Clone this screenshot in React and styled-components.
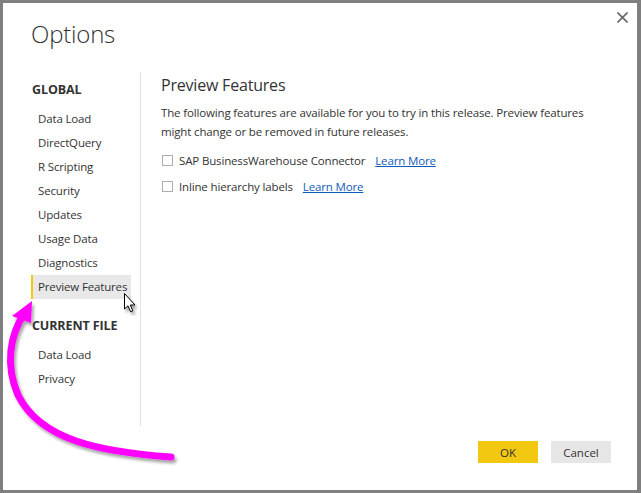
import React from "react";
import styled, { createGlobalStyle } from "styled-components";

const Global = createGlobalStyle`
  html, body { margin: 0; padding: 0; }
  body {
    background: #7f7f7f;
    font-family: "Open Sans", "Noto Sans", sans-serif;
    color: #333333;
  }
`;

const Dialog = styled.div`
  position: relative;
  margin: 3px 4px 3px 3px;
  width: 634px;
  height: 487px;
  background: #ffffff;
  display: flex;
  flex-direction: column;
  overflow: hidden;
`;

const Header = styled.div`
  height: 69px;
  display: flex;
  justify-content: space-between;
  align-items: flex-start;
  padding-left: 28px;
  box-sizing: border-box;
`;

const Title = styled.h1`
  margin: 0;
  padding-top: 15px;
  font-size: 24px;
  font-weight: 300;
  line-height: 32px;
  color: #333333;
  letter-spacing: -0.2px;
`;

const Close = styled.button`
  margin: 6px 7px 0 0;
  width: 16px;
  height: 16px;
  padding: 0;
  border: 0;
  background: transparent;
  display: flex;
  align-items: center;
  justify-content: center;
`;

const Body = styled.div`
  display: flex;
  height: 354px;
`;

const Sidebar = styled.nav`
  width: 138px;
  border-right: 1px solid #e1e1e1;
  padding: 7px 0 0 28px;
  box-sizing: border-box;
  display: flex;
  flex-direction: column;
`;

const Section = styled.div`
  height: 22px;
  line-height: 22px;
  font-size: 12.5px;
  font-weight: 700;
  padding-left: 1px;
  margin-top: ${(p) => (p.$first ? "0" : "16px")};
  margin-bottom: 6px;
  color: #333333;
  letter-spacing: -0.1px;
`;

const Item = styled.div`
  width: 100px;
  height: 24px;
  line-height: 24px;
  font-size: 11.5px;
  box-sizing: border-box;
  padding-left: 5px;
  border-left: 2px solid ${(p) => (p.$active ? "#f2c811" : "transparent")};
  background: ${(p) => (p.$active ? "#e8e8e8" : "transparent")};
  color: #333333;
  white-space: nowrap;
  letter-spacing: -0.15px;
`;

const Content = styled.section`
  flex: 1;
  padding: 2px 0 0 20px;
`;

const Heading = styled.h2`
  margin: 0;
  font-size: 16px;
  font-weight: 400;
  line-height: 22px;
  color: #333333;
  letter-spacing: -0.2px;
`;

const Desc = styled.p`
  margin: 7px 0 0 0;
  font-size: 11.5px;
  line-height: 19px;
  width: 445px;
  color: #333333;
  letter-spacing: -0.15px;
`;

const Options = styled.div`
  margin-top: 8px;
  display: flex;
  flex-direction: column;
  gap: 4px;
`;

const Row = styled.label`
  height: 22px;
  display: flex;
  align-items: center;
  font-size: 11.5px;
  color: #333333;
  letter-spacing: -0.15px;
`;

const Box = styled.span`
  width: 11px;
  height: 11px;
  box-sizing: border-box;
  border: 1px solid #adadad;
  background: #fff;
  margin: 0 6px 0 1px;
`;

const Link = styled.a`
  margin-left: 10px;
  color: #0f5bbd;
  text-decoration: underline;
  cursor: pointer;
`;

const Footer = styled.div`
  flex: 1;
  display: flex;
  justify-content: flex-end;
  align-items: flex-start;
  gap: 13px;
  padding: 15px 26px 0 0;
`;

const Button = styled.button`
  width: 60px;
  height: 22px;
  border: 0;
  padding: 0;
  font-family: inherit;
  font-size: 11.5px;
  color: #333333;
  background: ${(p) => (p.$primary ? "#f2c811" : "#e6e6e6")};
`;

const Overlay = styled.svg`
  position: absolute;
  left: 0;
  top: 0;
  pointer-events: none;
`;

export default function App() {
  return (
    <>
      <Global />
      <Dialog>
        <Header>
          <Title>Options</Title>
          <Close aria-label="Close">
            <svg width="11" height="11" viewBox="0 0 11 11">
              <path d="M0.5 0.5 L10.5 10.5 M10.5 0.5 L0.5 10.5" stroke="#666" strokeWidth="1.6" />
            </svg>
          </Close>
        </Header>
        <Body>
          <Sidebar>
            <Section $first>GLOBAL</Section>
            <Item>Data Load</Item>
            <Item>DirectQuery</Item>
            <Item>R Scripting</Item>
            <Item>Security</Item>
            <Item>Updates</Item>
            <Item>Usage Data</Item>
            <Item>Diagnostics</Item>
            <Item $active>Preview Features</Item>
            <Section>CURRENT FILE</Section>
            <Item>Data Load</Item>
            <Item>Privacy</Item>
          </Sidebar>
          <Content>
            <Heading>Preview Features</Heading>
            <Desc>
              The following features are available for you to try in this release. Preview features
              might change or be removed in future releases.
            </Desc>
            <Options>
              <Row>
                <Box />
                SAP BusinessWarehouse Connector
                <Link>Learn More</Link>
              </Row>
              <Row>
                <Box />
                Inline hierarchy labels
                <Link>Learn More</Link>
              </Row>
            </Options>
          </Content>
        </Body>
        <Footer>
          <Button $primary>OK</Button>
          <Button>Cancel</Button>
        </Footer>
        <Overlay width="634" height="487" viewBox="3 3 634 487">
          <defs>
            <filter id="sh" x="-20%" y="-20%" width="140%" height="140%">
              <feDropShadow dx="2" dy="3" stdDeviation="1.6" floodColor="#000" floodOpacity="0.35" />
            </filter>
          </defs>
          <g filter="url(#sh)">
            <path
              d="M171 457 C 100 452, 40 440, 18 395 C 5 365, 10 335, 24 314"
              fill="none"
              stroke="#ff00ff"
              strokeWidth="7"
              strokeLinecap="round"
            />
            <polygon points="32,301 12,316 31,323" fill="#ff00ff" />
          </g>
          <g filter="url(#sh)">
            <path
              d="M124.5 293.5 L124.5 309 L128 305.8 L130.6 311.8 L132.8 310.8 L130.3 305 L135 305 Z"
              fill="#ffffff"
              stroke="#000"
              strokeWidth="1"
              strokeLinejoin="miter"
            />
          </g>
        </Overlay>
      </Dialog>
    </>
  );
}
